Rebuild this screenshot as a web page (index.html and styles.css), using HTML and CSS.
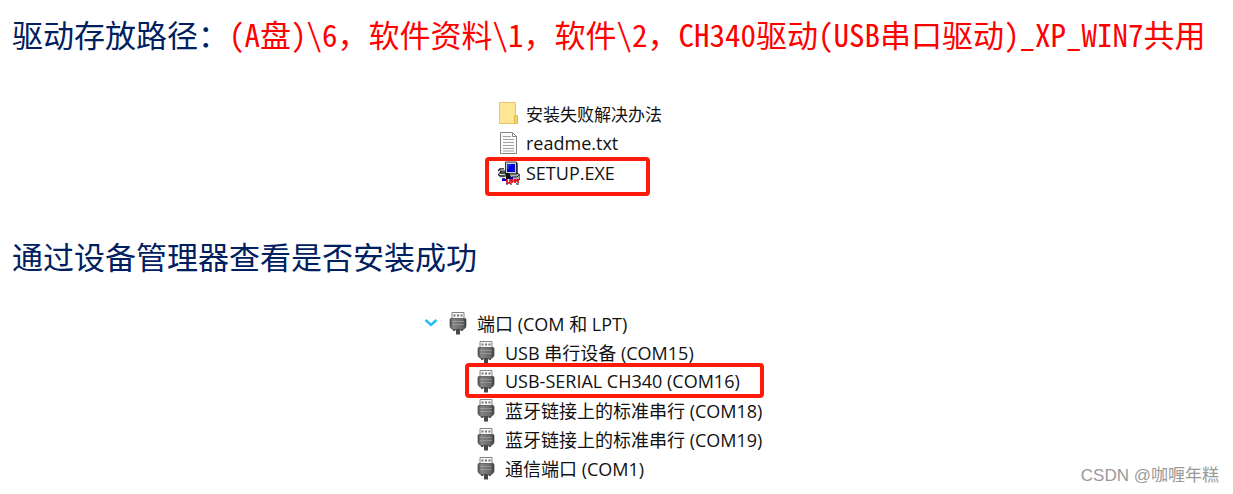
FILE: index.html
```html
<!DOCTYPE html>
<html lang="zh-CN">
<head>
<meta charset="utf-8">
<title>CH340 驱动安装</title>
<link rel="stylesheet" href="styles.css">
</head>
<body>
<svg class="defs" aria-hidden="true">
  <defs>
    <linearGradient id="metal" x1="0" x2="1" y1="0" y2="0">
      <stop offset="0" stop-color="#505050"/>
      <stop offset=".2" stop-color="#858585"/>
      <stop offset=".75" stop-color="#696969"/>
      <stop offset="1" stop-color="#3c3c3c"/>
    </linearGradient>
    <symbol id="port" viewBox="0 0 18 24">
      <path d="M3 1.500h12v8H3z" fill="#f6f6f6" stroke="#858585"/>
      <path d="M4.500 3.500h2v2h-2zM8 3.500h2v2H8zM11.500 3.500h2v2h-2z" fill="#777"/>
      <path d="M1 8.500q0-1 1-1h14q1 0 1 1V15q0 2-2 3l-2 1H5l-2-1q-2-1-2-3z" fill="url(#metal)" stroke="#484848" stroke-width=".7"/>
      <path d="M3 10.500h12M3 13.500h12" stroke="#a2a2a2" stroke-width=".7"/>
      <path d="M5 18v2M13 18v2" stroke="#555" stroke-width="2"/>
      <path d="M7 18h4v5.500H7z" fill="#484848"/>
    </symbol>
  </defs>
</svg>
<main class="page">
  <h2 class="heading">驱动存放路径：<span class="path"><span class="half">(A盘)\6</span>，软件资料<span class="half">\1</span>，软件<span class="half">\2</span>，<span class="half">CH340驱动(USB串口驱动)_XP_WIN7共用</span></span></h2>

  <ul class="files">
    <li class="file">
      <svg class="file-icon" viewBox="0 0 22 24" aria-hidden="true">
        <path d="M1.500 1.500h16v13l2 1v7h-18z" fill="#ffe694" stroke="#e8c661"/>
        <path d="M16.500 14.500v8h2q1 0 1-1v-7z" fill="#f5d36c" stroke="#e0b94c"/>
      </svg>
      <span class="name-cjk">安装失败解决办法</span>
    </li>
    <li class="file">
      <svg class="file-icon" viewBox="0 0 22 24" aria-hidden="true">
        <path d="M2.500 1.500h12l4 4v17h-16z" fill="#fafafa" stroke="#858585"/>
        <path d="M14.500 1.500v4h4" fill="none" stroke="#858585"/>
        <path d="M5 5.500h8M5 8.500h11M5 11.500h11M5 14.500h11M5 17.500h11M5 20h11" stroke="#a2a2a2"/>
      </svg>
      <span>readme.txt</span>
    </li>
    <li class="file marked">
      <svg class="file-icon" viewBox="0 0 22 24" aria-hidden="true">
        <path d="M7.500 1h11v12h-11z" fill="#d0d0d0" stroke="#333"/>
        <path d="M9 3h8v8H9z" fill="#0000d8"/>
        <path d="M9 3h4v2h-2v3H9z" fill="#1030ff"/>
        <path d="M19 2v10l3 2v4l-3 2h-6v-3h-3v-4h9z" fill="#b4b4b4" stroke="#222"/>
        <path d="M14 16h5l2-2" fill="none" stroke="#222"/>
        <path d="M6 8H2L0 10M7 10H3l-1 2h5M0 13l2 2h5M4 18h3" fill="none" stroke="#111" stroke-width="1.300"/>
        <path d="M3 9h4M3 13.500h4M2 16.500h4" stroke="#c6dfeb"/>
        <path d="M7 12h4l2 4v2H8z" fill="#111"/>
        <path d="M4 19h5M12 17h3" stroke="#0000c8" stroke-width="2"/>
        <path d="M9 18v4h3v-4M14 18v4M16 19h5M17 18v4M20 18v4" fill="none" stroke="#f00018" stroke-width="1.600"/>
        <path d="M8 23h2M12 23h2M18 23h3" stroke="#111"/>
      </svg>
      <span>SETUP.EXE</span>
    </li>
  </ul>

  <h2 class="heading">通过设备管理器查看是否安装成功</h2>

  <div class="tree">
    <div class="node">
      <svg class="chevron" viewBox="0 0 14 10" aria-hidden="true"><path d="M1.500 2l5.500 5 5.500-5" fill="none" stroke="#20bdf5" stroke-width="2.400"/></svg>
      <svg class="port-icon" aria-hidden="true"><use href="#port"/></svg>
      <span>端口 (COM 和 LPT)</span>
    </div>
    <ul class="children">
      <li class="node"><svg class="port-icon" aria-hidden="true"><use href="#port"/></svg><span>USB 串行设备 (COM15)</span></li>
      <li class="node marked"><svg class="port-icon" aria-hidden="true"><use href="#port"/></svg><span>USB-SERIAL CH340 (COM16)</span></li>
      <li class="node"><svg class="port-icon" aria-hidden="true"><use href="#port"/></svg><span>蓝牙链接上的标准串行 (COM18)</span></li>
      <li class="node"><svg class="port-icon" aria-hidden="true"><use href="#port"/></svg><span>蓝牙链接上的标准串行 (COM19)</span></li>
      <li class="node"><svg class="port-icon" aria-hidden="true"><use href="#port"/></svg><span>通信端口 (COM1)</span></li>
    </ul>
  </div>
</main>
<div class="watermark">CSDN @咖喱年糕</div>
</body>
</html>
```
FILE: styles.css
```css
body {
  margin: 0;
  background: #fff;
  color: #111;
  font-family: "Open Sans", "Noto Sans CJK SC", sans-serif;
  font-size: 18px;
}

ul {
  margin: 0;
  padding: 0;
  list-style: none;
}

.defs {
  position: absolute;
  width: 0;
  height: 0;
}

.page {
  padding: 10px 12px;
}

.heading {
  margin: 0;
  color: #002060;
  font-family: "Noto Sans CJK SC", sans-serif;
  font-size: 31px;
  font-weight: 400;
  line-height: 48px;
  white-space: nowrap;
}

.path {
  color: #f00;
}

.half {
  font-feature-settings: "hwid";
}

.files {
  width: 165px;
  margin: 40px 0 44px 473px;
}

.file {
  display: flex;
  align-items: center;
  gap: 6px;
  height: 30px;
  padding-left: 13px;
  white-space: nowrap;
}

.file-icon {
  flex: none;
  width: 22px;
  height: 24px;
}

.name-cjk {
  font-size: 17px;
}

.marked {
  position: relative;
}

.marked::after {
  content: "";
  position: absolute;
  inset: -3px 0;
  border: 4px solid #ff1a0a;
  border-radius: 4px;
}

.file.marked::after {
  inset: -1px 0 -8px;
}

.tree {
  width: 340px;
  margin: 28px 0 0 412px;
}

.node {
  display: flex;
  align-items: center;
  gap: 10px;
  height: 29px;
  white-space: nowrap;
}

.chevron {
  flex: none;
  width: 14px;
  height: 10px;
  margin-right: 1px;
}

.port-icon {
  flex: none;
  width: 18px;
  height: 24px;
}

.children {
  margin-left: 41px;
}

.children .node {
  padding-left: 12px;
}

.watermark {
  position: absolute;
  right: 14px;
  bottom: 6px;
  color: #999;
  font-family: "Liberation Sans", "Noto Sans CJK SC", sans-serif;
  font-size: 17px;
  line-height: 24px;
}
```
